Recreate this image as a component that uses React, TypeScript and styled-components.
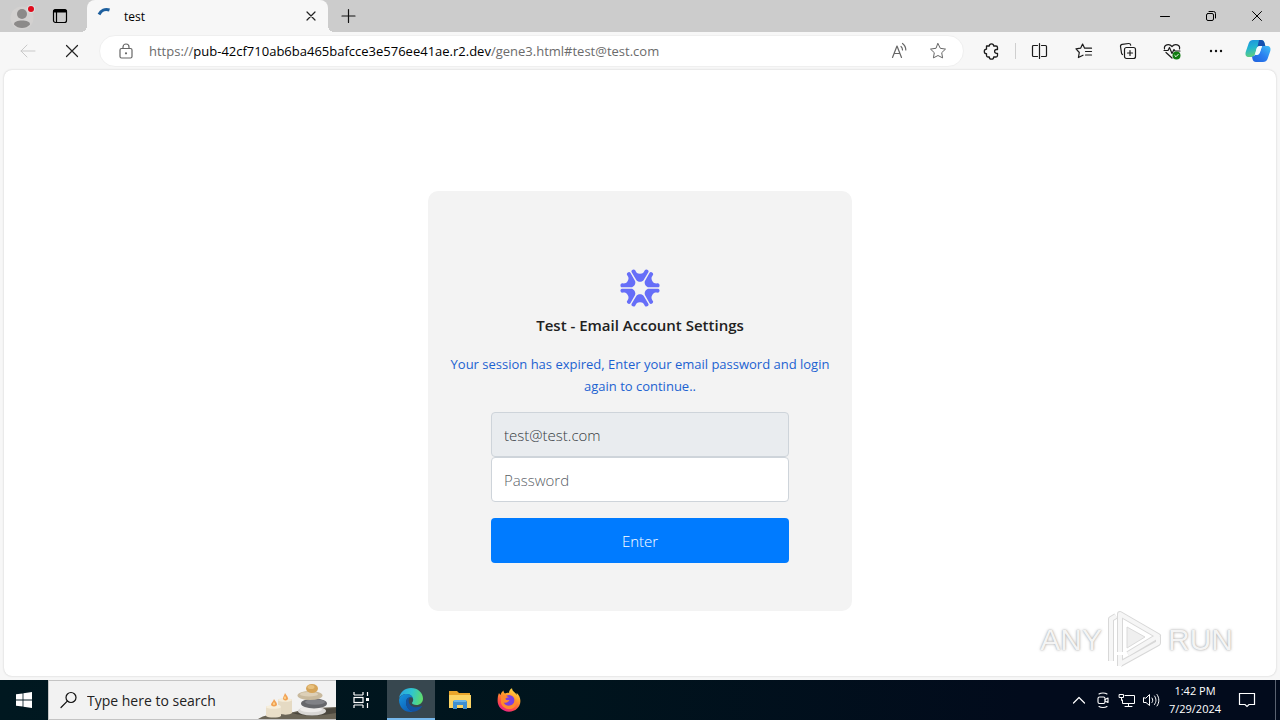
import React from 'react';
import styled, { createGlobalStyle, css } from 'styled-components';

const GlobalStyle = createGlobalStyle`
  * { box-sizing: border-box; }
  body { margin: 0; background: #f7f7f7; font-family: 'Open Sans', 'Noto Sans', sans-serif; }
  button, input { font-family: inherit; margin: 0; }
  button { border: 0; padding: 0; background: none; cursor: pointer; }
  svg { display: block; flex: none; }
`;

const Desktop = styled.div`
  display: flex;
  flex-direction: column;
  min-height: 100vh;
`;

const TabStrip = styled.header`
  display: flex;
  height: 32px;
  background: #cccccc;
`;

const StripButton = styled.button<{ $width: number }>`
  display: flex;
  align-items: center;
  justify-content: center;
  width: ${(p) => p.$width}px;
  height: 32px;
`;

const StripSpacer = styled.div<{ $width?: number }>`
  ${(p) => (p.$width ? css`width: ${p.$width}px;` : css`flex: 1;`)}
`;

const Tab = styled.div`
  position: relative;
  display: flex;
  align-items: center;
  width: 241px;
  height: 32px;
  padding: 0 4px 0 9px;
  border-radius: 8px 8px 0 0;
  background: #f7f7f7;

  &::before,
  &::after {
    content: '';
    position: absolute;
    bottom: 0;
    width: 6px;
    height: 6px;
  }
  &::before {
    right: 100%;
    background: radial-gradient(circle at 0 0, transparent 6px, #f7f7f7 6px);
  }
  &::after {
    left: 100%;
    background: radial-gradient(circle at 100% 0, transparent 6px, #f7f7f7 6px);
  }
`;

const TabTitle = styled.span`
  flex: 1;
  padding-left: 10px;
  font-size: 12px;
  color: #000;
`;

const Toolbar = styled.nav`
  display: flex;
  align-items: center;
  height: 38px;
  padding: 0 2px 0 6px;
  background: #f7f7f7;
`;

const ToolButton = styled.button<{ $width?: number }>`
  display: flex;
  flex: none;
  align-items: center;
  justify-content: center;
  width: ${(p) => p.$width ?? 44}px;
  height: 32px;
`;

const AddressBar = styled.div`
  display: flex;
  flex: 1;
  align-items: center;
  min-width: 0;
  height: 32px;
  margin: 0 5px;
  padding: 0 6px 0 17px;
  border: 1px solid #efefef;
  border-radius: 16px;
  background: #fff;
`;

const Address = styled.div`
  flex: 1;
  min-width: 0;
  padding-left: 14px;
  overflow: hidden;
  font-size: 13px;
  line-height: 20px;
  white-space: nowrap;
  color: #6b6b6b;
  outline: none;
`;

const Host = styled.span`
  color: #000;
`;

const Divider = styled.div`
  width: 1px;
  height: 16px;
  margin: 0 2px;
  background: #cfcfcf;
`;

const Page = styled.main`
  position: relative;
  flex: 1;
  margin: 0 4px 4px;
  padding: 121px 16px 65px;
  border-radius: 8px;
  background: #fff;
  box-shadow: 0 0 2px #c4c4c4;
`;

const Card = styled.section`
  display: flex;
  flex-direction: column;
  align-items: center;
  max-width: 424px;
  margin: 0 auto;
  padding: 77px 16px 48px;
  border-radius: 10px;
  background: #f3f3f3;
`;

const Title = styled.h1`
  margin: 5px 0 16px;
  font-size: 15px;
  font-weight: 600;
  line-height: 24px;
  color: #212121;
`;

const Notice = styled.p`
  margin: 0 0 15px;
  font-size: 13px;
  line-height: 22px;
  text-align: center;
  color: #1c62d1;
`;

const Form = styled.form`
  display: flex;
  flex-direction: column;
  width: 100%;
  max-width: 298px;
`;

const Field = styled.input`
  width: 100%;
  height: 45px;
  padding: 0 12px;
  border: 1px solid #ced4da;
  border-radius: 4px;
  background: #fff;
  font-size: 15px;
  font-weight: 300;
  color: #343a40;
  outline: none;
  &::placeholder { color: #596066; opacity: 1; }
  &:read-only { background: #e9ecef; }
`;

const Submit = styled.button`
  height: 45px;
  margin-top: 16px;
  border-radius: 4px;
  background: #007bff;
  font-size: 15px;
  font-weight: 300;
  color: #fff;
`;

const Watermark = styled.div`
  position: absolute;
  right: 43px;
  bottom: 4px;
  display: flex;
  align-items: center;
  gap: 5px;
  height: 64px;
  font-family: 'Liberation Sans Narrow', 'Liberation Sans', sans-serif;
  font-size: 30px;
  color: #f4f4f4;
  text-shadow: 0 0 3px #a8a8a8, 0 0 1px #c0c0c0;
  pointer-events: none;
`;

const Taskbar = styled.footer`
  display: flex;
  height: 40px;
  background: linear-gradient(90deg, #001820, #00141d 45%, #020b1c 80%);
`;

const TaskButton = styled.button<{ $active?: boolean; $width?: number }>`
  display: flex;
  flex: none;
  align-items: center;
  justify-content: center;
  width: ${(p) => p.$width ?? 49}px;
  height: 40px;
  ${(p) => p.$active && css`
    background: #37474f;
    box-shadow: inset 0 -2px #76b9ed;
  `}
`;

const SearchBox = styled.label`
  display: flex;
  flex: none;
  align-items: center;
  width: 288px;
  height: 40px;
  padding-left: 11px;
  border: 1px solid #c4c4c4;
  border-right: 0;
  background: #f2f2f2;
`;

const SearchInput = styled.input`
  flex: 1;
  min-width: 0;
  padding: 0 0 0 9px;
  border: 0;
  background: none;
  font-size: 14px;
  color: #222;
  outline: none;
  &::placeholder { color: #222; opacity: 1; }
`;

const Clock = styled.time`
  width: 64px;
  padding-top: 2px;
  font-size: 11px;
  line-height: 18px;
  text-align: center;
  white-space: nowrap;
  color: #fff;
`;

const DesktopEdge = styled.div`
  width: 5px;
  border-left: 1px solid #5a6270;
`;

type IconProps = { size?: number; color?: string; weight?: number; children: React.ReactNode };

const Icon = ({ size = 20, color = '#1b1b1b', weight = 1, children }: IconProps) => (
  <svg width={size} height={size} viewBox={`0 0 ${size} ${size}`} fill="none" stroke={color}
    strokeWidth={weight} strokeLinecap="round" strokeLinejoin="round" aria-hidden="true">
    {children}
  </svg>
);

const STAR = 'M10 2.6l2.3 4.7 5.2.8-3.8 3.6.9 5.2-4.6-2.4-4.6 2.4.9-5.2-3.8-3.6 5.2-.8z';

const Profile = () => (
  <svg width="26" height="28" viewBox="0 0 26 28" aria-hidden="true">
    <circle cx="12" cy="16" r="11.500" fill="#d3d1d0" />
    <circle cx="12" cy="12" r="5" fill="#8c8a89" />
    <path d="M4 22.500C4 19.500 7.500 18.500 12 18.500s8 1 8 4c-2 2.500-5 3.500-8 3.500s-6-1-8-3.500z" fill="#8c8a89" />
    <circle cx="21" cy="7" r="4" fill="#dedede" />
    <circle cx="21" cy="7" r="3" fill="#e00b1c" />
  </svg>
);

const Copilot = () => (
  <svg width="26" height="24" viewBox="0 0 26 24" aria-hidden="true">
    <defs>
      <linearGradient id="cpA" x1="0" y1="0" x2="0.300" y2="1">
        <stop offset="0" stopColor="#1b8fe0" /><stop offset=".5" stopColor="#22b5d0" /><stop offset="1" stopColor="#62cf7c" />
      </linearGradient>
      <linearGradient id="cpB" x1="1" y1="0" x2="0" y2="1">
        <stop offset="0" stopColor="#3fc0f5" /><stop offset=".5" stopColor="#2a7ff0" /><stop offset="1" stopColor="#1f5fdc" />
      </linearGradient>
    </defs>
    <path d="M8 1h8c2 0 3 1 3.500 3l.8 3H15c-2 0-3 1-3.500 3l-1.500 5c-.5 2-1.500 3-3.500 3H4c-3 0-4-2-3.300-5L3.800 4C4.500 2 6 1 8 1z" fill="url(#cpA)" />
    <path d="M14 1h2c2 0 3 1 3.500 3l.8 3H15c-1 0-2 .4-2.600 1.200z" fill="#164fae" />
    <path d="M18 23h-7c-2 0-3-1-3.500-3L7 17.500c2-.2 3-1 3.500-2.500h1.800c1.500 0 2.500-1 3-2.700L17 7h5c3 0 4 2 3.300 5l-2.800 8c-.7 2-2.300 3-4.500 3z" fill="url(#cpB)" />
    <path d="M11.500 10c.5-2 1.500-3 3.500-3h2l-2 6c-.5 2-1.500 3-3 3h-2z" fill="#f3fbff" />
  </svg>
);

const BrandMark = () => (
  <svg width="40" height="40" viewBox="-20 -20 40 40" fill="#666ef8" aria-hidden="true">
    {[0, 60, 120, 180, 240, 300].map((angle) => (
      <path key={angle} transform={`rotate(${angle})`}
        d="M-8.500-16c-.8-2 2.600-3.600 3.700-1.700C-3.700-15.300-2.800-14.200 0-14.200s3.700-1.100 4.800-3.500c1.100-1.900 4.500-.3 3.700 1.700L3.700-8C2.400-5.600-2.400-5.600-3.700-8z" />
    ))}
  </svg>
);

const PlayMark = () => (
  <svg width="56" height="62" viewBox="0 0 56 62" fill="none" strokeLinejoin="round" aria-hidden="true">
    <g stroke="#d8d8d8" strokeWidth="6">
      <path d="M4 52V10l5-3M13 43V5l38 22-30 18M13 55l38-21v-6M13 46v11" />
    </g>
    <g stroke="#f6f6f6" strokeWidth="4">
      <path d="M4 52V10l5-3M13 43V5l38 22-30 18M13 55l38-21v-6M13 46v11" />
    </g>
    <path d="M20 18l18 10-18 11z" fill="#efefef" stroke="#dadada" />
  </svg>
);

const StonesArt = () => (
  <svg width="78" height="38" viewBox="0 0 78 38" aria-hidden="true">
    <path d="M0 38c6-4 14-5 22-5 14-1 22-5 34-6 8 0 15-1 22-1v12z" fill="#6b6557" />
    <path d="M34 32c14-1 22-4 44-5v5c-16 3-30 4-44 0z" fill="#4b473e" />
    <path d="M8 26c0-2 15-2 15 0v9c-2 2-13 2-15 0z" fill="#eadfc9" />
    <ellipse cx="15.500" cy="26" rx="7.500" ry="1.800" fill="#f7efdd" />
    <path d="M20 19c0-2 14-2 14 0v13c-2 2-9 2-11 1v-7c0-1-1-2-3-2z" fill="#e5dac3" />
    <ellipse cx="27" cy="19" rx="7" ry="1.800" fill="#f5ecd8" />
    <path d="M16 18c2 3 3 4 3 5.500 0 2.500-6 2.500-6 0 0-1.500 2-2.500 3-5.500zM27 12c2 3 3 4 3 5.500 0 2.500-5 2.500-5 0 0-1.500 1-2.500 2-5.500z" fill="#f2a254" />
    <path d="M16 21c1 1.500 1 3 0 3s-1-1.500 0-3zM27 15c1 1.500 1 3 0 3s-1-1.500 0-3z" fill="#ffe9a6" />
    <ellipse cx="54" cy="30" rx="14" ry="4.500" fill="#d9d7d5" />
    <ellipse cx="53" cy="28.500" rx="11" ry="2.800" fill="#eeeceb" />
    <ellipse cx="56" cy="22.500" rx="13" ry="5" fill="#66676b" />
    <ellipse cx="57" cy="21" rx="10" ry="2.800" fill="#808186" />
    <ellipse cx="52" cy="14.500" rx="12.500" ry="4.500" fill="#c9ba9e" />
    <ellipse cx="51" cy="13.200" rx="9" ry="2.300" fill="#ddd0b8" />
    <ellipse cx="54" cy="7.500" rx="6" ry="4.500" fill="#d6a55a" />
    <ellipse cx="53" cy="6" rx="3.500" ry="2" fill="#e8c17e" />
  </svg>
);

const EdgeLogo = () => (
  <svg width="26" height="26" viewBox="0 0 26 26" aria-hidden="true">
    <defs>
      <linearGradient id="edTop" x1="0" y1=".3" x2="1" y2=".5">
        <stop offset="0" stopColor="#2ba5e2" /><stop offset=".5" stopColor="#2fc5cf" /><stop offset="1" stopColor="#5fdc6b" />
      </linearGradient>
      <linearGradient id="edLow" x1="0" y1="0" x2=".6" y2="1">
        <stop offset="0" stopColor="#1795dd" /><stop offset="1" stopColor="#0d5fb8" />
      </linearGradient>
    </defs>
    <path d="M1.200 11C2 5 7 1 13 1c7 0 12 5 12 10.500 0 4-3 6.500-6.500 6.500-3 0-4.500-1.200-4.500-2 0-.6 1.200-1.200 1.200-3.200C15.200 10 12.500 7 8.500 7 5.500 7 2.700 8.500 1.200 11z" fill="url(#edTop)" />
    <path d="M1 13c.5-3.500 3.500-6 7.500-6 3.500 0 6 2 6.600 4.500-.6-.8-1.600-1.300-2.800-1.300C9.500 10.200 8 13 8 15.500c0 4.500 3.500 8.500 7.500 9.300C8 26.500 1 21 1 13z" fill="url(#edLow)" />
    <path d="M8 15.500c0-2.800 1.600-5.200 4.300-5.200-1.200 1-1.600 2.200-1.600 3.700 0 4 4 6.300 7.800 6.300 2 0 3.500-.5 4.700-1.200.5-.3.900.2.600.6-2 3-5 4.800-8.300 5.100C11.500 24 8 20 8 15.500z" fill="#1352a0" />
  </svg>
);

const ExplorerLogo = () => (
  <svg width="22" height="20" viewBox="0 0 22 20" aria-hidden="true">
    <path d="M0 1h8l2 2h11v5H0z" fill="#e9a52b" />
    <path d="M0 5h22v13H0z" fill="#fbd364" />
    <path d="M4 19v-7c0-1 1-2 2-2h10c1 0 2 1 2 2v7h-4v-4H8v4z" fill="#3f8fd0" />
    <path d="M5 10h12v2H5z" fill="#6bb5e8" />
  </svg>
);

const FirefoxLogo = () => (
  <svg width="24" height="24" viewBox="0 0 24 24" aria-hidden="true">
    <defs>
      <linearGradient id="ffA" x1=".8" y1="0" x2=".3" y2="1">
        <stop offset="0" stopColor="#ffe14a" /><stop offset=".4" stopColor="#ff9b2a" /><stop offset=".75" stopColor="#ff4a48" /><stop offset="1" stopColor="#e8218a" />
      </linearGradient>
    </defs>
    <path d="M2 5c.6 1 1 1.600 1.500 2 .4-1.500 1.500-3.500 3-4.500 0 1.300.5 2.300 1.500 3 1.500-.8 3-.7 4-.5C12 3 13 1.200 15 .3c.2 2 1.200 3 2.700 4.200 1 .8 1.600 1.700 2 2.500 0-.8 0-1.500-.2-2.200C22 7 23.400 10 23.400 13c0 6-5 10.700-11.400 10.700S.6 18.800.6 13C.6 9.800 1 7 2 5z" fill="url(#ffA)" />
    <circle cx="12" cy="12.500" r="5.500" fill="#7b3fe0" />
    <path d="M4 8c3-1 6 0 8 1.500-2 0-3 .5-3.600 1.300C9.500 13 11 12 12.500 12c-1 2-3 3.500-6 2.500 1 3 5 4 8 2.500 2-1 3.500-3 3.200-6C20 13 20 17 17 19.500c-4 3-11 1.500-13-4.500z" fill="#ff8a2c" />
  </svg>
);

export default function App() {
  return (
    <Desktop>
      <GlobalStyle />
      <TabStrip>
        <StripSpacer $width={10} />
        <StripButton $width={26} aria-label="Profile"><Profile /></StripButton>
        <StripSpacer $width={8} />
        <StripButton $width={32} aria-label="Tab actions">
          <Icon color="#000"><rect x="3.500" y="3.500" width="13" height="13" rx="2" strokeWidth="1.200" /><path d="M4.500 5h11" strokeWidth="3" /><path d="M6.500 6v10" strokeWidth="1.200" /></Icon>
        </StripButton>
        <StripSpacer $width={11} />
        <Tab>
          <Icon size={18} color="#1d5f9e" weight={3}><path d="M3 7.500C5 3.500 9 1.500 13.500 3" strokeLinecap="butt" /></Icon>
          <TabTitle>test</TabTitle>
          <StripButton $width={26} aria-label="Close tab">
            <Icon size={16} color="#222" weight={1.2}><path d="M4 4l8 8M12 4l-8 8" /></Icon>
          </StripButton>
        </Tab>
        <StripButton $width={41} aria-label="New tab">
          <Icon color="#111" weight={1.2}><path d="M9.500 3.500v13M3 10h13" /></Icon>
        </StripButton>
        <StripSpacer />
        <StripButton $width={46} aria-label="Minimize"><Icon size={16} color="#000"><path d="M3.500 8.500h9" /></Icon></StripButton>
        <StripButton $width={46} aria-label="Restore">
          <Icon size={16} color="#000"><rect x="3.500" y="5.500" width="7" height="7" rx="1.500" /><path d="M6 3.500h4.500a2 2 0 0 1 2 2V10" /></Icon>
        </StripButton>
        <StripButton $width={46} aria-label="Close"><Icon size={16} color="#000"><path d="M3.500 3.500l9 9M12.500 3.500l-9 9" /></Icon></StripButton>
      </TabStrip>

      <Toolbar>
        <ToolButton aria-label="Back"><Icon color="#c9c9c9"><path d="M17 10H3M9 4l-6 6 6 6" /></Icon></ToolButton>
        <ToolButton aria-label="Stop"><Icon color="#222" weight={1.2}><path d="M4.500 4.500l11 11M15.500 4.500l-11 11" /></Icon></ToolButton>
        <AddressBar>
          <Icon size={18} color="#666" weight={1.2}>
            <rect x="3" y="6.500" width="12" height="9.500" rx="1.500" /><path d="M6 6.500V5a3 3 0 0 1 6 0v1.500" /><circle cx="9" cy="11.300" r=".5" />
          </Icon>
          <Address role="textbox" aria-label="Address" contentEditable suppressContentEditableWarning spellCheck={false}>
            https://<Host>pub-42cf710ab6ba465bafcce3e576ee41ae.r2.dev</Host>/gene3.html#test@test.com
          </Address>
          <ToolButton $width={38} aria-label="Read aloud">
            <Icon color="#666" weight={1.2}><path d="M2.500 16.500L7 5l4.500 11.500M4 12.500h6M11 5.500c1 .8 1.500 2 1.500 3.500M12.500 2.500c2 1.500 3.300 3.500 3.300 6.500" /></Icon>
          </ToolButton>
          <ToolButton $width={38} aria-label="Add to favorites"><Icon color="#666"><path d={STAR} /></Icon></ToolButton>
        </AddressBar>
        <ToolButton aria-label="Extensions">
          <Icon weight={1.3}><path d="M5.500 5h2.800a2.200 2.200 0 0 1 4.400 0H15a1.500 1.500 0 0 1 1.500 1.500V8.500h-1a1.800 1.800 0 0 0 0 3.800h1v2.200A1.500 1.500 0 0 1 15 16h-2.300a2.200 2.200 0 0 1-4.400 0H7a1.500 1.500 0 0 1-1.500-1.500v-1.900a2.200 2.200 0 0 1 0-4.400z" /></Icon>
        </ToolButton>
        <Divider />
        <ToolButton aria-label="Split screen">
          <Icon weight={1.2}><path d="M7.500 4.500h-4a1 1 0 0 0-1 1v9a1 1 0 0 0 1 1h4M11.500 4.500h4a1 1 0 0 1 1 1v9a1 1 0 0 1-1 1h-4M9.500 2.500v15" /></Icon>
        </ToolButton>
        <ToolButton aria-label="Favorites">
          <Icon weight={1.2}><path d="M9 14.200l-4.600 2.300.9-5L2 7.800l4.600-.6L8.600 3l2 4.200h6.900M11.500 10.500h6M11.500 14h6" /></Icon>
        </ToolButton>
        <ToolButton aria-label="Collections">
          <Icon weight={1.2}><path d="M4.500 13.500a2 2 0 0 1-1-1.500L2.500 5.500a2 2 0 0 1 1.700-2.200L10.500 2.500a2 2 0 0 1 2.200 1.700" /><rect x="6.500" y="6.500" width="11" height="11" rx="2" /><path d="M12 9.500v5M9.500 12h5" /></Icon>
        </ToolButton>
        <ToolButton aria-label="Browser essentials">
          <Icon weight={1.2}>
            <path d="M2.500 8c-.8-4 4.500-6 7.500-2.500C13 2 18.500 4 17.500 8M4 11.500l6 5.500M2 9.500h4l1.500-3 2.500 6 2-4 1 1.500h5" />
            <circle cx="14.500" cy="14.500" r="4" fill="#107c10" stroke="none" /><path d="M12.800 14.500l1.200 1.200 2.200-2.300" stroke="#fff" strokeWidth="1" />
          </Icon>
        </ToolButton>
        <ToolButton aria-label="Settings and more">
          <Icon><g fill="#111" stroke="none"><circle cx="5" cy="10" r="1.200" /><circle cx="10" cy="10" r="1.200" /><circle cx="15" cy="10" r="1.200" /></g></Icon>
        </ToolButton>
        <ToolButton $width={40} aria-label="Copilot"><Copilot /></ToolButton>
      </Toolbar>

      <Page>
        <Card>
          <BrandMark />
          <Title>Test - Email Account Settings</Title>
          <Notice>Your session has expired, Enter your email password and login again to continue..</Notice>
          <Form onSubmit={(e) => e.preventDefault()}>
            <Field type="email" aria-label="Email" value="test@test.com" readOnly />
            <Field type="password" aria-label="Password" placeholder="Password" autoComplete="off" />
            <Submit type="submit">Enter</Submit>
          </Form>
        </Card>
        <Watermark>
          <span>ANY</span>
          <PlayMark />
          <span>RUN</span>
        </Watermark>
      </Page>

      <Taskbar>
        <TaskButton $width={48} aria-label="Start">
          <svg width="16" height="16" viewBox="0 0 16 16" fill="#fff" aria-hidden="true">
            <path d="M0 2.300L6.600 1.400V7.600H0zM7.400 1.300L16 0v7.600H7.400zM0 8.400h6.600v6.200L0 13.700zM7.400 8.400H16V16l-8.600-1.200z" />
          </svg>
        </TaskButton>
        <SearchBox>
          <Icon size={18} color="#111" weight={1.2}><circle cx="11" cy="6.500" r="5" /><path d="M7.300 10.200L1 16.500" /></Icon>
          <SearchInput type="search" aria-label="Search" placeholder="Type here to search" />
          <StonesArt />
        </SearchBox>
        <TaskButton $width={51} aria-label="Task view">
          <Icon size={18} color="#fff" weight={1.2}><path d="M1 1v3M10 1v3M1 4h9M1 14h9M1 14v3M10 14v3M14.500 1v4M14.500 12v5" strokeLinecap="butt" /><rect x="1" y="6.500" width="9" height="5" strokeLinejoin="miter" /><path d="M13 7h3v3h-3z" fill="#fff" stroke="none" /></Icon>
        </TaskButton>
        <TaskButton $width={48} $active aria-label="Edge"><EdgeLogo /></TaskButton>
        <TaskButton aria-label="File Explorer"><ExplorerLogo /></TaskButton>
        <TaskButton aria-label="Firefox"><FirefoxLogo /></TaskButton>
        <StripSpacer />
        <TaskButton $width={24} aria-label="Show hidden icons"><Icon size={16} color="#fff" weight={1.2}><path d="M2.500 11L8 5.500 13.500 11" /></Icon></TaskButton>
        <TaskButton $width={24} aria-label="Meet now">
          <Icon size={18} color="#fff" weight={1.1}><rect x="4" y="6" width="7" height="6.500" rx="1.500" /><path d="M11 8.500l3-1.500v4.500l-3-1.500M5 3c2-1.300 6-1.300 8 0M5 15.500c2 1.300 6 1.300 8 0" /></Icon>
        </TaskButton>
        <TaskButton $width={24} aria-label="Network">
          <Icon size={18} color="#fff"><path d="M7 4.500h9.500v8H4.500V9M10.500 12.500v3M7 15.500h7M1.500 3.500h4v3h-4zM3.500 6.500v3h1" strokeLinejoin="miter" /></Icon>
        </TaskButton>
        <TaskButton $width={24} aria-label="Volume">
          <Icon size={18} color="#fff"><path d="M1.500 7v4.500h2.500l3.500 3V3.500L4 7zM10 7c1 1.500 1 3 0 4.500M12.500 5c2 2.700 2 5.800 0 8.500M15 3.500c2.500 3.500 2.500 8 0 11.500" /></Icon>
        </TaskButton>
        <Clock>1:42 PM<br />7/29/2024</Clock>
        <TaskButton $width={40} aria-label="Notifications">
          <Icon size={18} color="#fff" weight={1.2}><path d="M1.500 2.500h15v11H11l-2 2-2-2H1.500z" strokeLinejoin="miter" /></Icon>
        </TaskButton>
        <StripSpacer $width={8} />
        <DesktopEdge />
      </Taskbar>
    </Desktop>
  );
}
